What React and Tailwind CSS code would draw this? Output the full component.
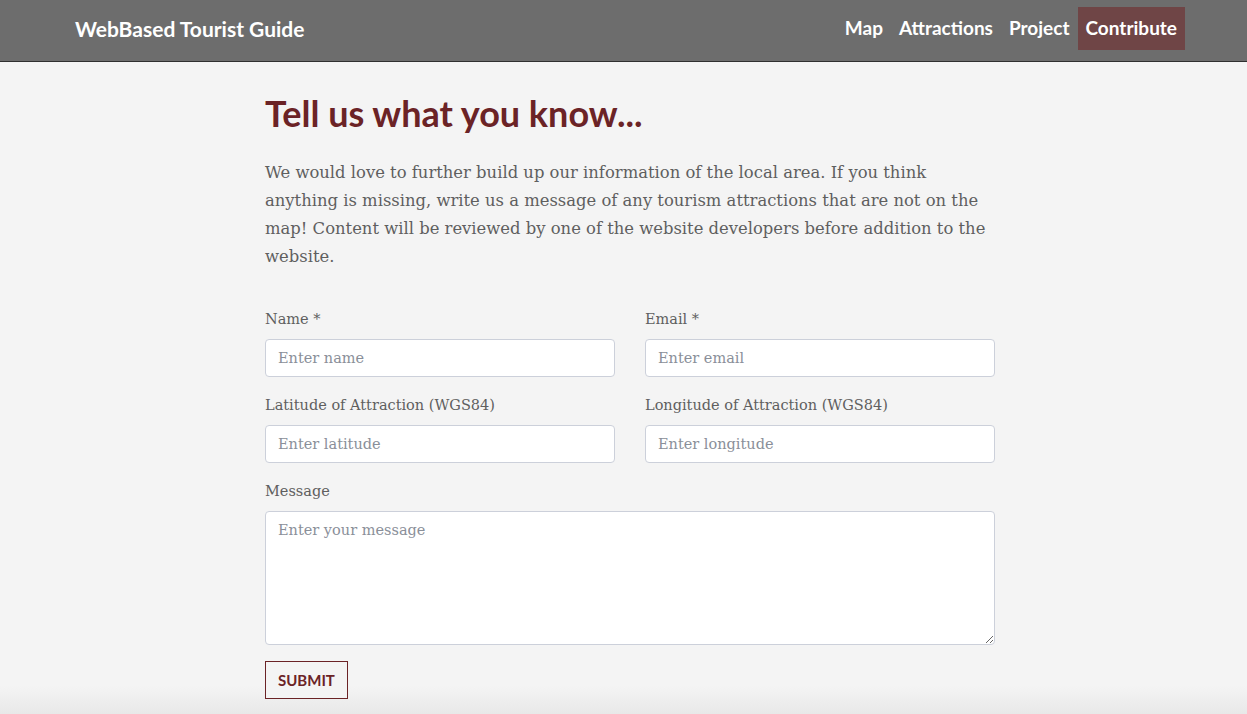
import { useState } from "react";

const navLinks = ["Map", "Attractions", "Project", "Contribute"];

function Field({ label, placeholder, value, onChange }) {
    return (
        <div className="flex flex-col">
            <label className="text-[14.5px] leading-[22px] text-[#5f5f5f] mb-[9px]">
                {label}
            </label>
            <input
                type="text"
                value={value}
                onChange={onChange}
                placeholder={placeholder}
                className="h-[38px] w-full rounded-[4px] border border-[#ccd0da] bg-white px-3 text-[14.5px] text-[#555] placeholder:text-[#8a8f99] outline-none"
            />
        </div>
    );
}

function App() {
    const [data, setData] = useState({
        name: "",
        email: "",
        lat: "",
        lng: "",
        message: "",
    });

    const set = (key) => (e) => setData({ ...data, [key]: e.target.value });

    return (
        <div className="min-h-[714px] bg-[#f4f4f4] font-['DejaVu_Serif',serif] relative">
            <header className="h-[62px] bg-[#6d6d6d] border-b border-[#2f2f2f] flex justify-between pl-[75px] pr-[62px] font-['Lato',sans-serif]">
                <span className="text-white font-bold text-[21px] leading-[25px] pt-[16px]">
                    WebBased Tourist Guide
                </span>
                <nav className="flex items-start pt-[7px]">
                    {navLinks.map((link) => (
                        <a
                            key={link}
                            href="#"
                            className={
                                link === "Contribute"
                                    ? "flex items-center h-[43px] px-2 bg-[#6f4546] text-white font-bold text-[19px]"
                                    : "flex items-center h-[43px] px-2 text-white font-bold text-[19px]"
                            }
                        >
                            {link}
                        </a>
                    ))}
                </nav>
            </header>

            <main className="w-[730px] ml-[265px] pt-[31px] pb-[15px]">
                <h1 className="font-['Lato',sans-serif] font-bold text-[36px] leading-[41px] text-[#6b2326] mb-[25px]">
                    Tell us what you know...
                </h1>
                <p className="text-[16.4px] leading-[28px] text-[#5f5f5f] mb-[37px] pr-[6px]">
                    We would love to further build up our information of the local
                    area. If you think anything is missing, write us a message of any
                    tourism attractions that are not on the map! Content will be
                    reviewed by one of the website developers before addition to the
                    website.
                </p>

                <form onSubmit={(e) => e.preventDefault()}>
                    <div className="grid grid-cols-2 gap-x-[30px] gap-y-[17px]">
                        <Field
                            label="Name *"
                            placeholder="Enter name"
                            value={data.name}
                            onChange={set("name")}
                        />
                        <Field
                            label="Email *"
                            placeholder="Enter email"
                            value={data.email}
                            onChange={set("email")}
                        />
                        <Field
                            label="Latitude of Attraction (WGS84)"
                            placeholder="Enter latitude"
                            value={data.lat}
                            onChange={set("lat")}
                        />
                        <Field
                            label="Longitude of Attraction (WGS84)"
                            placeholder="Enter longitude"
                            value={data.lng}
                            onChange={set("lng")}
                        />
                    </div>

                    <div className="flex flex-col mt-[17px]">
                        <label className="text-[14.5px] leading-[22px] text-[#5f5f5f] mb-[9px]">
                            Message
                        </label>
                        <textarea
                            value={data.message}
                            onChange={set("message")}
                            placeholder="Enter your message"
                            className="h-[134px] w-full rounded-[4px] border border-[#ccd0da] bg-white px-3 py-[8px] text-[14.5px] text-[#555] placeholder:text-[#8a8f99] outline-none"
                        />
                    </div>

                    <button
                        type="submit"
                        className="relative z-10 mt-[16px] h-[38px] px-3 border border-[#6b2326] bg-[#f4f4f4] text-[#6b2326] font-['Lato',sans-serif] font-bold text-[15px] uppercase"
                    >
                        Submit
                    </button>
                </form>
            </main>
            <div className="absolute bottom-0 left-0 right-0 h-[28px] bg-gradient-to-b from-[#f4f4f4] to-[#e8e8e8]" />
        </div>
    );
}

export default App;
